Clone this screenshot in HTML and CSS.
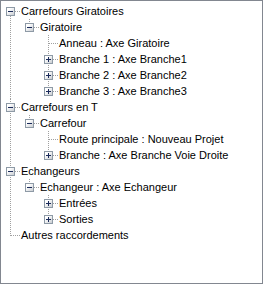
FILE: index.html
```html
<!DOCTYPE html>
<html>
<head>
<meta charset="utf-8">
<link rel="stylesheet" href="styles.css">
</head>
<body>
<div class="tree">
  <ul class="level root">
    <li class="item">
      <div class="row"><span class="box minus"></span><span class="label">Carrefours Giratoires</span></div>
      <ul class="level">
        <li class="item last">
          <div class="row"><span class="box minus"></span><span class="label">Giratoire</span></div>
          <ul class="level">
            <li class="item"><div class="row"><span class="spacer"></span><span class="label">Anneau : Axe Giratoire</span></div></li>
            <li class="item"><div class="row"><span class="box plus"></span><span class="label">Branche 1 : Axe Branche1</span></div></li>
            <li class="item"><div class="row"><span class="box plus"></span><span class="label">Branche 2 : Axe Branche2</span></div></li>
            <li class="item last"><div class="row"><span class="box plus"></span><span class="label">Branche 3 : Axe Branche3</span></div></li>
          </ul>
        </li>
      </ul>
    </li>
    <li class="item">
      <div class="row"><span class="box minus"></span><span class="label">Carrefours en T</span></div>
      <ul class="level">
        <li class="item last">
          <div class="row"><span class="box minus"></span><span class="label">Carrefour</span></div>
          <ul class="level">
            <li class="item"><div class="row"><span class="spacer"></span><span class="label">Route principale : Nouveau Projet</span></div></li>
            <li class="item last"><div class="row"><span class="box plus"></span><span class="label">Branche : Axe Branche Voie Droite</span></div></li>
          </ul>
        </li>
      </ul>
    </li>
    <li class="item">
      <div class="row"><span class="box minus"></span><span class="label">Echangeurs</span></div>
      <ul class="level">
        <li class="item last">
          <div class="row"><span class="box minus"></span><span class="label">Echangeur : Axe Echangeur</span></div>
          <ul class="level">
            <li class="item"><div class="row"><span class="box plus"></span><span class="label">Entrées</span></div></li>
            <li class="item last"><div class="row"><span class="box plus"></span><span class="label">Sorties</span></div></li>
          </ul>
        </li>
      </ul>
    </li>
    <li class="item last">
      <div class="row"><span class="spacer"></span><span class="label">Autres raccordements</span></div>
    </li>
  </ul>
</div>
</body>
</html>
```

FILE: styles.css
```css
html, body {
  margin: 0;
  padding: 0;
  background: #ffffff;
}

.tree {
  box-sizing: border-box;
  width: 263px;
  height: 284px;
  border: 1px solid #828790;
  background: #ffffff;
  padding: 2px 0 0 5px;
  font-family: "Liberation Sans", Arial, sans-serif;
  font-size: 11px;
  color: #000000;
  overflow: hidden;
}

.level {
  list-style: none;
  margin: 0;
  padding: 0;
}

.level .level {
  padding-left: 19px;
}

.item {
  position: relative;
}

/* vertical connector */
.item::before {
  content: "";
  position: absolute;
  left: 4px;
  top: 0;
  bottom: 0;
  width: 1px;
  background: repeating-linear-gradient(to bottom, #a0a0a0 0 1px, transparent 1px 2px);
}

.item.last::before {
  bottom: auto;
  height: 9px;
}

.root > .item:first-child::before {
  top: 9px;
}

.row {
  position: relative;
  display: flex;
  align-items: flex-start;
  height: 16px;
}

/* horizontal connector */
.row::before {
  content: "";
  position: absolute;
  left: 5px;
  top: 8px;
  width: 13px;
  height: 1px;
  background: repeating-linear-gradient(to right, #a0a0a0 0 1px, transparent 1px 2px);
}

.box, .spacer {
  position: relative;
  z-index: 1;
  flex: none;
  width: 9px;
  height: 9px;
  margin-top: 4px;
  box-sizing: border-box;
}

.box {
  border: 1px solid #8e9aa6;
}

.box.minus {
  background:
    linear-gradient(#1a2a5a, #1a2a5a) 1px 3px / 5px 1px no-repeat,
    linear-gradient(135deg, #ffffff 25%, #c9cdd2 100%);
}

.box.plus {
  background:
    linear-gradient(#1a2a5a, #1a2a5a) 1px 3px / 5px 1px no-repeat,
    linear-gradient(#1a2a5a, #1a2a5a) 3px 1px / 1px 5px no-repeat,
    linear-gradient(135deg, #ffffff 25%, #c9cdd2 100%);
}

.label {
  position: relative;
  z-index: 1;
  margin-left: 5px;
  padding: 0 1px;
  line-height: 16px;
  white-space: nowrap;
  background: #ffffff;
}
```
